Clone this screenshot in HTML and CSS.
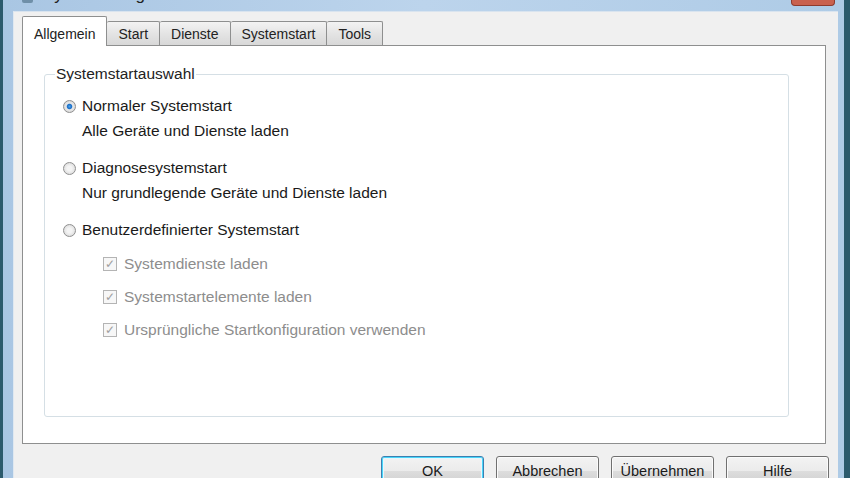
FILE: index.html
```html
<!DOCTYPE html>
<html lang="de">
<head>
  <meta charset="UTF-8" />
  <title>Systemkonfiguration</title>
  <link rel="stylesheet" href="styles.css">
</head>
<body>
  <div class="window">
    <div class="titlebar">
      <div class="title">
        <span class="title-icon"></span>
        <span class="title-text">Systemkonfiguration</span>
      </div>
      <div class="btn-close"></div>
    </div>

    <div class="client">
      <div class="tabs">
        <div class="tab active">Allgemein</div>
        <div class="tab">Start</div>
        <div class="tab">Dienste</div>
        <div class="tab">Systemstart</div>
        <div class="tab">Tools</div>
      </div>

      <div class="panel">
        <fieldset class="groupbox">
          <legend>Systemstartauswahl</legend>

          <div class="option">
            <div class="option-row"><span class="radio checked"></span>Normaler Systemstart</div>
            <div class="desc">Alle Geräte und Dienste laden</div>
          </div>

          <div class="option">
            <div class="option-row"><span class="radio"></span>Diagnosesystemstart</div>
            <div class="desc">Nur grundlegende Geräte und Dienste laden</div>
          </div>

          <div class="option">
            <div class="option-row"><span class="radio"></span>Benutzerdefinierter Systemstart</div>
            <div class="checklist">
              <div class="check-row"><span class="checkbox">✓</span>Systemdienste laden</div>
              <div class="check-row"><span class="checkbox">✓</span>Systemstartelemente laden</div>
              <div class="check-row"><span class="checkbox">✓</span>Ursprüngliche Startkonfiguration verwenden</div>
            </div>
          </div>
        </fieldset>
      </div>

      <div class="buttons">
        <button class="btn btn-default">OK</button>
        <button class="btn">Abbrechen</button>
        <button class="btn">Übernehmen</button>
        <button class="btn">Hilfe</button>
      </div>
    </div>
  </div>
</body>
</html>
```

FILE: styles.css
```css
html, body {
  margin: 0;
  height: 100%;
  overflow: hidden;
}
body {
  font-family: "Liberation Sans", Arial, sans-serif;
  font-size: 15.5px;
  color: #1a1a1a;
  background: #2d5b6e;
}
.window {
  height: 100%;
  box-sizing: border-box;
  display: flex;
  flex-direction: column;
  background: linear-gradient(to right, #a9c6e3, #bcd4ec 50%, #aecbe6);
  border-left: 3px solid #2b5a6c;
  border-right: 6px solid #2b5a6c;
  padding: 0 6px 0 10px;
}
.titlebar {
  height: 11px;
  flex: none;
  display: flex;
  justify-content: space-between;
  align-items: flex-start;
  overflow: hidden;
}
.title {
  display: flex;
  align-items: center;
  gap: 10px;
  margin-top: -14px;
  padding-left: 9px;
}
.title-icon {
  width: 11px;
  height: 16px;
  background: #6f8fa8;
  border-radius: 2px;
}
.title-text {
  font-size: 17px;
  line-height: 17px;
  color: #222;
}
.btn-close {
  width: 42px;
  height: 5px;
  margin-right: 3px;
  background: #c9614e;
  border: 1px solid #8e3b2e;
  border-top: none;
  border-radius: 0 0 4px 4px;
}
.client {
  flex: 1;
  background: #f0f0f0;
  border-top: 1px solid #d9e4ef;
  border-left: 1px solid #dfe8f1;
  padding: 5px 12px 0 8px;
}
.tabs {
  display: flex;
  align-items: flex-end;
  height: 28px;
  padding-left: 1px;
}
.tab {
  height: 23px;
  line-height: 25px;
  padding: 0 11px;
  font-size: 14px;
  background: linear-gradient(#f3f3f3, #e4e4e4 50%, #d8d8d8);
  border: 1px solid #8e8f8f;
  border-bottom: none;
  border-left: none;
  border-radius: 2px 2px 0 0;
  color: #222;
}
.tab.active {
  height: 29px;
  line-height: 34px;
  margin-bottom: -1px;
  margin-left: -1px;
  border-left: 1px solid #8e8f8f;
  background: #fff;
  position: relative;
  z-index: 1;
}
.panel {
  height: 399px;
  background: #fff;
  border: 1px solid #8e8f8f;
  padding: 20px 36px 0 21px;
  box-sizing: border-box;
}
.groupbox {
  margin: 0;
  height: 351px;
  box-sizing: border-box;
  border: 1px solid #d5dfe5;
  border-radius: 3px;
  padding: 12px 0 0 18px;
}
.groupbox legend {
  line-height: 16px;
  padding: 0 1px;
  margin-left: -8px;
  color: #222;
}
.option {
  margin-bottom: 12px;
}
.option-row, .desc {
  height: 24px;
  line-height: 24px;
  display: flex;
  align-items: center;
}
.desc {
  height: 26px;
  line-height: 26px;
  padding-left: 19px;
}
.radio {
  width: 11px;
  height: 11px;
  margin-right: 6px;
  border: 1px solid #8f8f8f;
  border-radius: 50%;
  background: radial-gradient(circle, #f4f4f4 30%, #dcdcdc 80%);
}
.radio.checked {
  background: radial-gradient(circle, #4aa3ec 0, #1c6fc8 28%, #e9e9e9 42%, #d6d6d6 80%);
}
.checklist {
  margin-top: 5px;
  padding-left: 40px;
}
.check-row {
  height: 33px;
  display: flex;
  align-items: center;
  color: #8d8d8d;
}
.checkbox {
  width: 12px;
  height: 12px;
  margin-right: 7px;
  border: 1px solid #b4b4b4;
  background: #f7f7f7;
  font-size: 12px;
  line-height: 12px;
  text-align: center;
  color: #a0a0a0;
}
.buttons {
  display: flex;
  justify-content: flex-end;
  gap: 12px;
  padding-top: 12px;
  margin-right: -3px;
}
.btn {
  width: 103px;
  height: 30px;
  font-family: "Liberation Sans", Arial, sans-serif;
  font-size: 14.5px;
  color: #1a1a1a;
  border: 1px solid #707070;
  border-radius: 3px;
  background: linear-gradient(#f3f3f3, #ebebeb 50%, #dddddd 50%, #cfcfcf);
  box-shadow: inset 0 0 0 1px #fbfbfb;
  padding: 0;
}
.btn-default {
  border-color: #3c7fb1;
  box-shadow: inset 0 0 0 1px #48d6fa, inset 0 0 0 2px #e8f6fd;
}
```
